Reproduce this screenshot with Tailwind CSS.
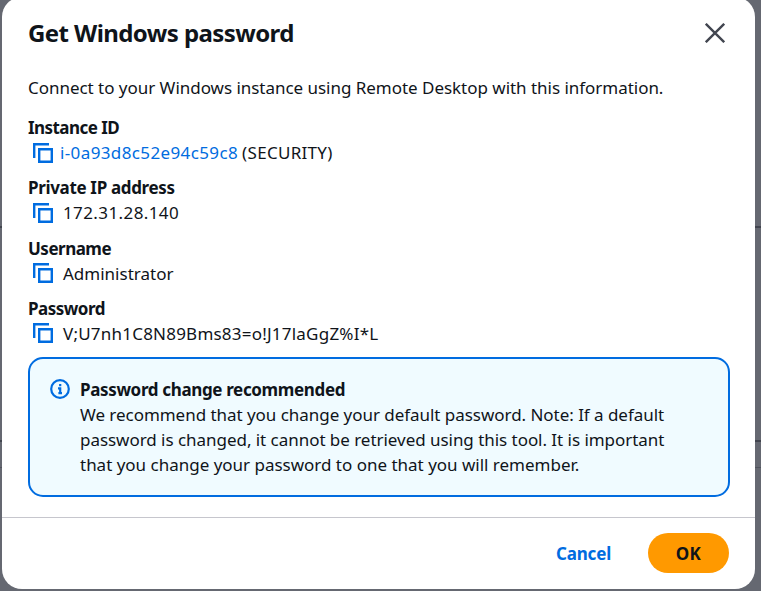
<!DOCTYPE html>
<html lang="en">
<head>
    <meta charset="UTF-8">
    <meta name="viewport" content="width=device-width, initial-scale=1.0">
    <title>Get Windows password</title>
    <script src="https://cdn.jsdelivr.net/npm/@tailwindcss/browser@4"></script>
</head>
<body class="relative h-[591px] overflow-hidden bg-[#656871] font-['Noto_Sans',sans-serif] text-[17px] leading-[25px] text-[#0f141a]">
    <!-- table lines of the page behind the dialog -->
    <div class="absolute inset-x-0 top-[226px] h-[2px] bg-[#42454f]"></div>
    <div class="absolute inset-x-0 top-[440px] h-[2px] bg-[#42454f]"></div>
    <div class="absolute inset-x-0 top-[467px] h-px bg-[#50535d]"></div>

    <div class="relative ml-[2px] -mt-[3px] flex h-[592px] w-[753px] flex-col rounded-[20px] bg-white">
        <div class="flex h-[71px] items-center justify-between pl-[26px] pr-[30px]">
            <h2 class="text-[24px] font-bold leading-[30px] tracking-[-0.58px]">Get Windows password</h2>
            <button aria-label="Close">
                <svg class="h-[20px] w-[20px]" viewBox="0 0 20 20" fill="none" stroke="#424650" stroke-width="2.4">
                    <path d="M0.8 0.8 19.2 19.2M19.2 0.8 0.8 19.2" />
                </svg>
            </button>
        </div>

        <div class="flex flex-col px-[26px] pt-[7px]">
            <p class="tracking-[-0.03px]">Connect to your Windows instance using Remote Desktop with this information.</p>

            <div class="mt-[15px] flex flex-col gap-[10.3px]">
                <div>
                    <div class="font-bold tracking-[-0.55px]">Instance ID</div>
                    <div class="flex items-center pl-[5px]">
                        <svg class="mr-[7px] h-[20px] w-[20px]" viewBox="0 0 20 20" fill="none" stroke="#006ce0" stroke-width="2.4">
                            <path d="M1.2 15V1.2H16" />
                            <path d="M6.2 6.2H18.8V18.8H6.2Z" />
                        </svg>
                        <a href="#" class="mr-[4px] tracking-[0.38px] text-[#006ce0]">i-0a93d8c52e94c59c8</a>
                        <span class="tracking-[0.3px]">(SECURITY)</span>
                    </div>
                </div>
                <div>
                    <div class="font-bold tracking-[-0.34px]">Private IP address</div>
                    <div class="flex items-center pl-[5px]">
                        <svg class="mr-[10px] h-[20px] w-[20px]" viewBox="0 0 20 20" fill="none" stroke="#006ce0" stroke-width="2.4">
                            <path d="M1.2 15V1.2H16" />
                            <path d="M6.2 6.2H18.8V18.8H6.2Z" />
                        </svg>
                        <span class="tracking-[0.4px]">172.31.28.140</span>
                    </div>
                </div>
                <div>
                    <div class="font-bold tracking-[-0.5px]">Username</div>
                    <div class="flex items-center pl-[5px]">
                        <svg class="mr-[10px] h-[20px] w-[20px]" viewBox="0 0 20 20" fill="none" stroke="#006ce0" stroke-width="2.4">
                            <path d="M1.2 15V1.2H16" />
                            <path d="M6.2 6.2H18.8V18.8H6.2Z" />
                        </svg>
                        <span>Administrator</span>
                    </div>
                </div>
                <div>
                    <div class="font-bold tracking-[-0.5px]">Password</div>
                    <div class="flex items-center pl-[5px]">
                        <svg class="mr-[10px] h-[20px] w-[20px]" viewBox="0 0 20 20" fill="none" stroke="#006ce0" stroke-width="2.4">
                            <path d="M1.2 15V1.2H16" />
                            <path d="M6.2 6.2H18.8V18.8H6.2Z" />
                        </svg>
                        <span class="tracking-[0.22px]">V;U7nh1C8N89Bms83=o!J17laGgZ%I*L</span>
                    </div>
                </div>
            </div>

            <div class="mt-[11px] flex h-[140px] w-[702px] rounded-[15px] border-2 border-[#006ce0] bg-[#f0fbff] pl-[20px] pt-[18px]">
                <svg class="mr-[10px] mt-[2px] h-[20px] w-[20px] shrink-0" viewBox="0 0 20 20" fill="none" stroke="#006ce0" stroke-width="2.2">
                    <circle cx="10" cy="10" r="8.8" />
                    <path d="M10.2 5V7.3M8 9.3H10.2V15M8.4 14.2H12" stroke-width="2.2" />
                </svg>
                <div class="whitespace-nowrap">
                    <div class="font-bold tracking-[-0.35px]">Password change recommended</div>
                    <p class="tracking-[-0.04px]">
                        We recommend that you change your default password. Note: If a default<br>
                        password is changed, it cannot be retrieved using this tool. It is important<br>
                        <span class="tracking-[-0.01px]">that you change your password to one that you will remember.</span>
                    </p>
                </div>
            </div>
        </div>

        <div class="mt-[20px] flex flex-1 items-center justify-end border-t border-[#c6c6cd] pr-[26px] font-bold">
            <button class="mr-[37px] tracking-[-0.2px] text-[#006ce0]">Cancel</button>
            <button class="h-[40px] w-[81px] rounded-full bg-[#ff9900] tracking-[0.3px]">OK</button>
        </div>
    </div>
</body>
</html>
